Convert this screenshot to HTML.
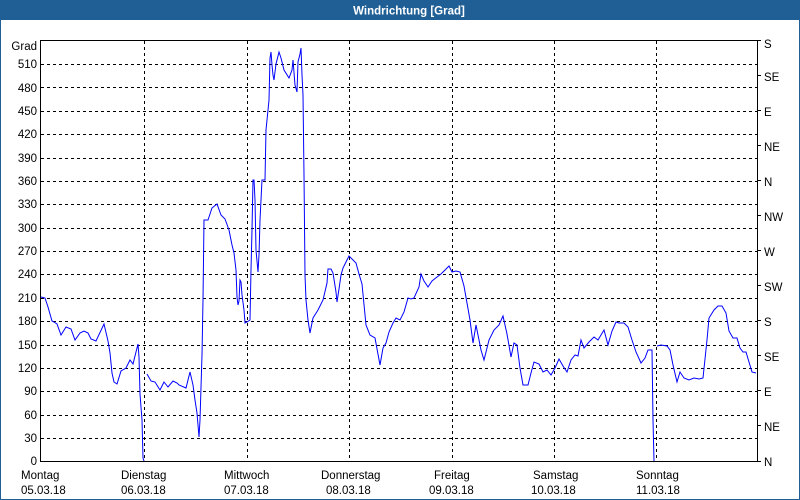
<!DOCTYPE html>
<html><head><meta charset="utf-8"><style>
body{margin:0;width:800px;height:500px;overflow:hidden;background:#fff;font-family:"Liberation Sans",sans-serif}
</style></head><body>
<svg width="800" height="500" xmlns="http://www.w3.org/2000/svg" style="display:block">
<rect x="0" y="0" width="800" height="500" fill="#fff"/>
<rect x="0.5" y="0.5" width="799" height="499" fill="none" stroke="#1f5f96"/>
<rect x="0" y="0" width="800" height="20" fill="#1f5f96"/>
<text x="409" y="14.5" fill="#fff" font-size="11.5" font-weight="bold" text-anchor="middle" font-family="Liberation Sans,sans-serif">Windrichtung [Grad]</text>
<g stroke="#000" stroke-width="1" stroke-dasharray="3,3" fill="none">
<path d="M41 64.5H757M41 87.5H757M41 111.5H757M41 134.5H757M41 158.5H757M41 181.5H757M41 204.5H757M41 228.5H757M41 251.5H757M41 274.5H757M41 298.5H757M41 321.5H757M41 345.5H757M41 368.5H757M41 391.5H757M41 415.5H757M41 438.5H757"/>
<path d="M144.5 41V461M247.5 41V461M349.5 41V461M452.5 41V461M554.5 41V461M656.5 41V461"/>
</g>
<g stroke="#000" stroke-width="1" fill="none">
<path d="M40.5 40V461.5H757.5V40M40 40.5H757"/>
<path d="M757 40.5h4M757 75.5h4M757 110.5h4M757 145.5h4M757 180.5h4M757 215.5h4M757 250.5h4M757 285.5h4M757 320.5h4M757 355.5h4M757 390.5h4M757 425.5h4M757 461.5h4"/>
</g>
<g font-size="11.5" fill="#000" text-anchor="end" font-family="Liberation Sans,sans-serif">
<text x="37" y="50">Grad</text>
<text x="37" y="68">510</text><text x="37" y="92">480</text><text x="37" y="115">450</text><text x="37" y="138">420</text><text x="37" y="162">390</text><text x="37" y="185">360</text><text x="37" y="208">330</text><text x="37" y="232">300</text><text x="37" y="255">270</text><text x="37" y="278">240</text><text x="37" y="302">210</text><text x="37" y="325">180</text><text x="37" y="349">150</text><text x="37" y="372">120</text><text x="37" y="395">90</text><text x="37" y="419">60</text><text x="37" y="442">30</text><text x="37" y="465">0</text>
</g>
<g font-size="11.5" fill="#000" font-family="Liberation Sans,sans-serif">
<text x="764" y="48">S</text><text x="764" y="81">SE</text><text x="764" y="116">E</text><text x="764" y="151">NE</text><text x="764" y="186">N</text><text x="764" y="221">NW</text><text x="764" y="256">W</text><text x="764" y="291">SW</text><text x="764" y="326">S</text><text x="764" y="361">SE</text><text x="764" y="396">E</text><text x="764" y="431">NE</text><text x="764" y="466">N</text>
</g>
<g font-size="11.5" fill="#000" font-family="Liberation Sans,sans-serif">
<text x="21" y="479">Montag</text><text x="21" y="494">05.03.18</text>
<text x="121" y="479">Dienstag</text><text x="121" y="494">06.03.18</text>
<text x="224" y="479">Mittwoch</text><text x="224" y="494">07.03.18</text>
<text x="321" y="479">Donnerstag</text><text x="326" y="494">08.03.18</text>
<text x="434" y="479">Freitag</text><text x="429" y="494">09.03.18</text>
<text x="533" y="479">Samstag</text><text x="531" y="494">10.03.18</text>
<text x="636" y="479">Sonntag</text><text x="636" y="494">11.03.18</text>
</g>
<g stroke="#0000ff" stroke-width="1" fill="none">
<polyline points="41,297 45,298 48,307 52,321 54,322 57,324 61,335 66,327 71,329 75,340 80,333 84,331 88,333 91,339 96,341 104,324 108,341 110,353 112,373 114,382 117,384 121,371 126,368 130,360 133,364 138,344 139,357 140,394 142,420 143,458 144,461"/>
<polyline points="147,374 151,381 155,382 160,390 164,382 168,387 173,381 177,383 179,385 186,388 190,372 193,385 195,400 197,413 199,437 200,420 202,355 203,300 204,220 208,220 212,208 217,204 221,215 225,219 229,230 232,245 234,253 236,270 237,297 238,305 239,301 240,280 241,282 242,295 244,310 245,323 247,322 250,320 251,270 252,230 253,180 254,180 255,200 256,250 258,272 259,255 260,220 262,180 265,180 266,130 269,100 270,58 271,52 272,65 273,75 274,80 276,64 279,52 281,58 284,70 289,78 292,70 293,60 295,85 297,92 298,62 300,54 301,48 302,75 303,95 304,175 305,275 306,300 308,320 310,333 313,318 318,310 323,300 327,283 328,269 331,269 333,273 336,292 337,302 339,289 341,275 343,268 349,256 352,259 356,263 359,274 362,284 366,325 370,335 375,338 380,365 383,348 386,343 389,332 393,323 396,318 400,320 404,312 408,298 411,299 414,298 419,287 421,274 424,281 428,287 432,281 437,277 441,274 445,270 449,266 452,272 456,271 460,272 464,286 467,303 470,320 473,343 476,325 481,350 484,360 489,340 494,330 499,325 503,316 507,334 511,357 514,343 517,345 520,368 523,385 528,385 531,373 534,362 539,364 543,372 547,370 551,375 555,368 559,359 563,366 567,372 571,360 575,355 578,356 581,340 584,348 589,342 594,337 598,340 601,335 604,330 608,345 612,331 616,322 619,323 624,323 628,327 632,340 636,352 641,363 645,358 648,350 652,350 653,420 654,461"/>
<polyline points="657,346 661,345 667,346 670,350 673,365 677,382 680,372 684,378 689,380 694,378 699,379 703,378 707,340 709,318 714,310 718,306 722,306 726,313 729,331 733,338 737,338 740,348 743,352 746,352 749,362 752,372 756,373"/>
</g>
</svg>
</body></html>
